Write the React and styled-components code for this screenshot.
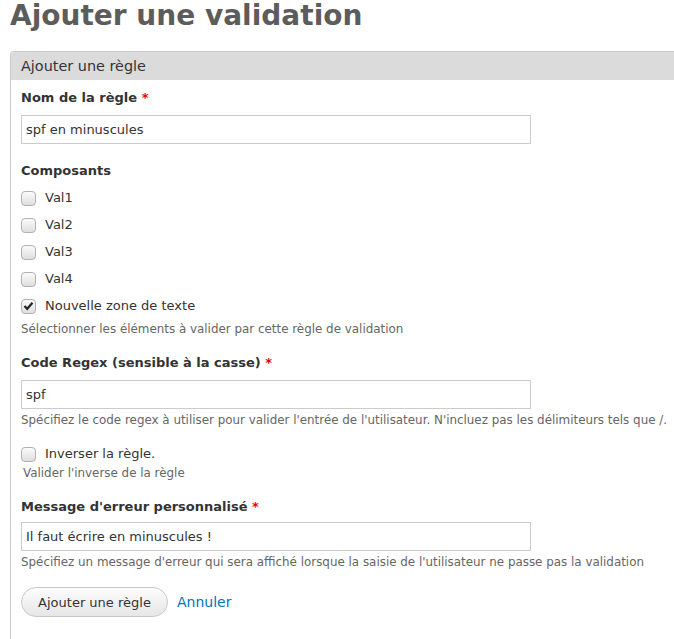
import React from 'react'
import styled, { createGlobalStyle } from 'styled-components'

const GlobalStyle = createGlobalStyle`
  html, body {
    margin: 0;
    padding: 0;
    background: #fff;
    overflow: hidden;
  }
  body {
    font-family: "DejaVu Sans", "Liberation Sans", sans-serif;
    color: #333;
    font-size: 13px;
  }
`

const Page = styled.div`
  padding: 0 0 0 10px;
`

const Title = styled.h1`
  margin: 0;
  padding-top: 1px;
  font-size: 28px;
  line-height: 30px;
  font-weight: bold;
  color: #5c5c5c;
`

const Fieldset = styled.section`
  margin-top: 20px;
  width: 700px;
  border: 1px solid #ccc;
  border-bottom: none;
  border-radius: 4px 0 0 0;
  overflow: hidden;
`

const Legend = styled.div`
  background: #dbdbdb;
  height: 28px;
  line-height: 28px;
  padding-left: 10px;
  font-size: 14.4px;
  color: #333;
`

const Body = styled.div`
  padding: 9px 10px 30px 10px;
`

const Item = styled.div`
  margin-bottom: ${p => p.$gap || 17}px;
`

const Label = styled.div`
  font-weight: bold;
  font-size: 13px;
  line-height: 18px;
  margin-bottom: ${p => p.$below || 8}px;
`

const Required = styled.span`
  color: #e00;
`

const TextInput = styled.input`
  box-sizing: border-box;
  display: block;
  width: 510px;
  height: 29px;
  border: 1px solid #ccc;
  padding: 0 4px;
  font-family: "DejaVu Sans", sans-serif;
  font-size: 13px;
  color: #333;
  outline: none;
`

const CheckRow = styled.label`
  display: flex;
  align-items: center;
  gap: 9px;
  height: 18px;
  margin-bottom: 9px;
  font-size: 13px;
  color: #333;
`

const Box = styled.span`
  box-sizing: border-box;
  width: 15px;
  height: 15px;
  border: 1px solid #b0b0b0;
  border-radius: 4px;
  background: linear-gradient(#fbfbfb, #dedede);
  display: flex;
  align-items: center;
  justify-content: center;
  margin-top: 2px;
`

const Description = styled.div`
  font-size: 11.9px;
  line-height: 16px;
  color: #666;
  margin-top: ${p => p.$top || 3}px;
  padding-left: ${p => p.$indent || 0}px;
  white-space: nowrap;
`

const Actions = styled.div`
  display: flex;
  align-items: center;
  gap: 9px;
`

const Button = styled.button`
  box-sizing: border-box;
  width: 147px;
  height: 30px;
  border: 1px solid #c8c8c8;
  border-radius: 15px;
  background: linear-gradient(#fdfdfd, #e6e6e6);
  font-family: "DejaVu Sans", sans-serif;
  font-size: 13px;
  color: #333;
  padding: 0;
`

const Link = styled.a`
  color: #0074bd;
  font-size: 14px;
  text-decoration: none;
`

const Checkbox = ({ checked, children }) => (
  <CheckRow>
    <Box>
      {checked && (
        <svg width="11" height="10" viewBox="0 0 11 10">
          <path d="M1.5 5 L4.2 7.8 L9.5 1.8" fill="none" stroke="#222" strokeWidth="2.2" />
        </svg>
      )}
    </Box>
    {children}
  </CheckRow>
)

const App = () => (
  <Page>
    <GlobalStyle />
    <Title>Ajouter une validation</Title>
    <Fieldset>
      <Legend>Ajouter une règle</Legend>
      <Body>
        <Item $gap={18}>
          <Label>Nom de la règle <Required>*</Required></Label>
          <TextInput defaultValue="spf en minuscules" />
        </Item>
        <Item $gap={17}>
          <Label>Composants</Label>
          <Checkbox>Val1</Checkbox>
          <Checkbox>Val2</Checkbox>
          <Checkbox>Val3</Checkbox>
          <Checkbox>Val4</Checkbox>
          <Checkbox checked>Nouvelle zone de texte</Checkbox>
          <Description $top={-2}>Sélectionner les éléments à valider par cette règle de validation</Description>
        </Item>
        <Item $gap={16}>
          <Label>Code Regex (sensible à la casse) <Required>*</Required></Label>
          <TextInput defaultValue="spf" />
          <Description>Spécifiez le code regex à utiliser pour valider l'entrée de l'utilisateur. N'incluez pas les délimiteurs tels que /.</Description>
        </Item>
        <Item $gap={17}>
          <Checkbox>Inverser la règle.</Checkbox>
          <Description $top={-6} $indent={2}>Valider l'inverse de la règle</Description>
        </Item>
        <Item $gap={17}>
          <Label $below={6}>Message d'erreur personnalisé <Required>*</Required></Label>
          <TextInput defaultValue="Il faut écrire en minuscules !" />
          <Description>Spécifiez un message d'erreur qui sera affiché lorsque la saisie de l'utilisateur ne passe pas la validation</Description>
        </Item>
        <Actions>
          <Button>Ajouter une règle</Button>
          <Link href="#">Annuler</Link>
        </Actions>
      </Body>
    </Fieldset>
  </Page>
)

export default App
